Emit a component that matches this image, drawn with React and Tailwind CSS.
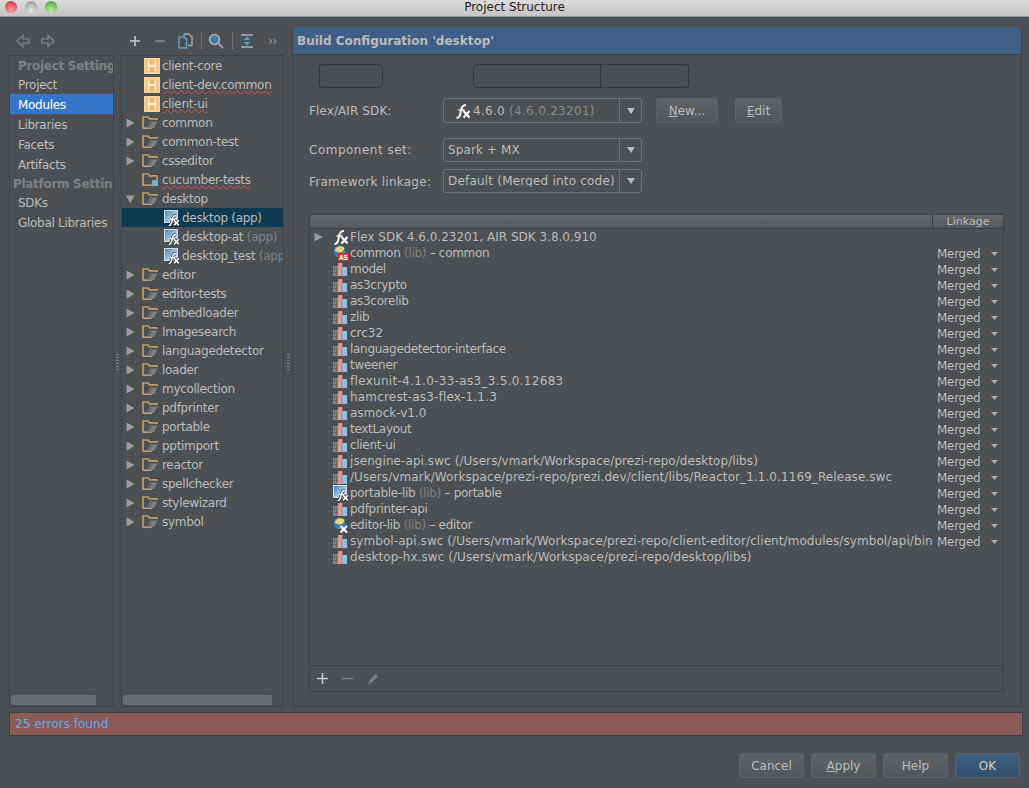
import React from "react";

const F = "[font-family:'DejaVu_Sans',sans-serif]";

function FxGlyph({ sw = 1 }) {
  return (
    <>
      <path d="M1.5 15 C5 15 5.2 11.5 6 7.5 C6.6 4 7.8 2 11 2" fill="none" stroke="#fff" strokeWidth={1.9 * sw} />
      <path d="M3.5 7 H9.5" stroke="#fff" strokeWidth="1.5" />
      <path d="M8.5 8 L14.5 14.5 M14.5 8 L8.5 14.5" stroke="#fff" strokeWidth="2.1" />
    </>
  );
}

function FxIcon({ className = "" }) {
  return (
    <svg width="16" height="16" viewBox="0 0 16 16" className={"shrink-0 " + className}>
      <FxGlyph />
    </svg>
  );
}

function AppIcon({ w = 16, id = "a" }) {
  return (
    <svg width={w} height={w} viewBox="0 0 16 16" className="shrink-0">
      <defs>
        <linearGradient id={"g" + id} x1="0" y1="0" x2="1" y2="1">
          <stop offset="0" stopColor="#3f86c0" />
          <stop offset="1" stopColor="#e4eef6" />
        </linearGradient>
      </defs>
      <rect x="0.5" y="0.5" width="13" height="12" fill={`url(#g${id})`} stroke="#d5dde3" />
      <g transform="translate(3.5 4) scale(0.78)">
        <path d="M1.5 15 C5 15 5.2 11.5 6 7.5 C6.6 4 7.8 2 11 2" fill="none" stroke="#3c3f41" strokeWidth="4" />
        <path d="M8.5 8 L14.5 14.5 M14.5 8 L8.5 14.5" stroke="#3c3f41" strokeWidth="4" />
        <FxGlyph />
      </g>
    </svg>
  );
}

function HIcon() {
  return (
    <svg width="16" height="16" viewBox="0 0 16 16" className="shrink-0">
      <rect x="0.5" y="0.5" width="15" height="15" fill="#fbd394" stroke="#fad08c" />
      <rect x="2" y="2" width="12" height="12" fill="#f5b565" />
      <path d="M4.5 2.5 V13.5 M11.5 2.5 V13.5 M4.5 8 H11.5" stroke="#fff2dc" strokeWidth="2" fill="none" />
    </svg>
  );
}

function FolderIcon({ kind }) {
  return (
    <svg width="17" height="15" viewBox="0 0 17 15" className="shrink-0">
      <path d="M1 13.5 V2 H6 L7.5 3.8 H15" fill="none" stroke="#c09a6b" strokeWidth="1.7" />
      <path d="M1 13.2 H10" stroke="#c09a6b" strokeWidth="1.7" />
      {kind === "test" ? (
        <>
          <path d="M15 3 V8" stroke="#c09a6b" strokeWidth="1.7" />
          <rect x="10" y="8" width="6" height="6" fill="#76aecb" />
        </>
      ) : (
        <>
          <path d="M15 3 V5" stroke="#c09a6b" strokeWidth="1.7" />
          <path d="M5 13 L8 6.5 H15.5 L12 13 Z" fill="#7c7e80" />
          <path d="M7 12 L9.5 7.5" stroke="#57595b" strokeWidth="1.2" />
        </>
      )}
    </svg>
  );
}

function LibIcon() {
  return (
    <svg width="15" height="14" viewBox="0 0 15 14" className="shrink-0">
      <rect x="0" y="4" width="5" height="10" fill="#8c8e90" />
      <path d="M1.7 4 V14 M3.4 4 V14 M0 7 H5 M0 10.5 H5" stroke="#5e6062" strokeWidth="0.7" />
      <rect x="5" y="1" width="4.5" height="13" fill="#d88f8c" />
      <path d="M7.2 1 V14" stroke="#e8aaa7" strokeWidth="1" />
      <rect x="9.5" y="5" width="4.5" height="9" fill="#8cc3e4" />
    </svg>
  );
}

function CommonIcon({ fx }) {
  return (
    <svg width="16" height="16" viewBox="0 0 16 16" className="shrink-0">
      <circle cx="6.5" cy="6.5" r="6" fill="#3f7fb6" />
      <path d="M2 6 C2 2 7 0 10.5 2 C12.5 4 10 7.5 6 7.5 Z" fill="#f3d36b" />
      {fx ? (
        <path d="M7.5 9 L14 15.5 M14 9 L7.5 15.5" stroke="#fff" strokeWidth="2.2" />
      ) : (
        <>
          <rect x="5" y="8" width="11" height="7.5" fill="#c93b35" />
          <text x="6" y="14.5" fontSize="6.5" fontWeight="700" fill="#fff" fontFamily="Liberation Sans">AS</text>
        </>
      )}
    </svg>
  );
}

function Arrow({ open }) {
  return (
    <svg width="9" height="10" viewBox="0 0 9 10" className="shrink-0">
      {open ? <path d="M0 1.5 H8.5 L4.2 9 Z" fill="#9a9c9d" /> : <path d="M0.5 0.5 L8.5 5 L0.5 9.5 Z" fill="#9a9c9d" />}
    </svg>
  );
}

function Caret({ w = 8, h = 6, fill = "#bbbbbb" }) {
  return (
    <svg width={w} height={h} viewBox="0 0 8 6" preserveAspectRatio="none">
      <path d="M0 0 H8 L4 6 Z" fill={fill} />
    </svg>
  );
}

function Sep() {
  return <div className="h-[17px] w-0 border-l border-dotted border-[#85888a]" />;
}

function Btn({ children, className = "", primary }) {
  return (
    <div
      className={
        "flex h-[25px] items-center justify-center rounded-[3px] border bg-gradient-to-b tracking-normal " +
        (primary
          ? "border-[#55616d] from-[#3f5f80] to-[#31506f] text-[#cfcfcf] "
          : "border-[#5e6264] from-[#5e6366] to-[#525759] text-[#bbbbbb] ") +
        className
      }
    >
      {children}
    </div>
  );
}

function Combo({ children, className = "" }) {
  return (
    <div className={"flex w-[199px] items-center rounded-[3px] border border-[#6f7274] bg-[#4c5052] text-[#bbbbbb] " + className}>
      <div className="flex min-w-0 flex-1 items-center overflow-hidden whitespace-nowrap">{children}</div>
      <div className="flex h-full w-[22px] items-center justify-center border-l border-[#6f7274]">
        <Caret />
      </div>
    </div>
  );
}

const leftItems = [
  ["Project Settings", "h", "h-[19px]"],
  ["Project", "", "h-[19px]"],
  ["Modules", "s", "h-[20px] pt-[1px]"],
  ["Libraries", "", "h-[20px] pt-[1px]"],
  ["Facets", "", "h-[20px] pt-[1px]"],
  ["Artifacts", "", "h-[20px] pt-[1px]"],
  ["Platform Settings", "h2", "h-[19px]"],
  ["SDKs", "", "h-[19px]"],
  ["Global Libraries", "", "h-[20px] pt-[1px]"],
];

const tree = [
  ["client-core", "h"],
  ["client-dev.common", "h", "w"],
  ["client-ui", "h", "w"],
  ["common", "f"],
  ["common-test", "f"],
  ["csseditor", "f"],
  ["cucumber-tests", "t", "w"],
  ["desktop", "o"],
  ["desktop", "a", "", " (app)", true],
  ["desktop-at", "a", "", " (app)"],
  ["desktop_test", "a", "", " (app)"],
  ["editor", "f"],
  ["editor-tests", "f"],
  ["embedloader", "f"],
  ["Imagesearch", "f"],
  ["languagedetector", "f"],
  ["loader", "f"],
  ["mycollection", "f"],
  ["pdfprinter", "f"],
  ["portable", "f"],
  ["pptimport", "f"],
  ["reactor", "f"],
  ["spellchecker", "f"],
  ["stylewizard", "f"],
  ["symbol", "f"],
];

const deps = [
  { n: "model" },
  { n: "as3crypto" },
  { n: "as3corelib" },
  { n: "zlib" },
  { n: "crc32", t: "tracking-normal" },
  { n: "languagedetector-interface" },
  { n: "tweener" },
  { n: "flexunit-4.1.0-33-as3_3.5.0.12683", t: "tracking-[0.3px]" },
  { n: "hamcrest-as3-flex-1.1.3", t: "tracking-[0.18px]" },
  { n: "asmock-v1.0", t: "tracking-normal" },
  { n: "textLayout" },
  { n: "client-ui" },
  { n: "jsengine-api.swc (/Users/vmark/Workspace/prezi-repo/desktop/libs)", t: "tracking-[0.07px]" },
  { n: "/Users/vmark/Workspace/prezi-repo/prezi.dev/client/libs/Reactor_1.1.0.1169_Release.swc", t: "tracking-[0.08px]" },
  { n: "portable-lib", ic: "app", g: " (lib)", tail: " – portable" },
  { n: "pdfprinter-api" },
  { n: "editor-lib", ic: "globe", g: " (lib)", tail: " – editor" },
  { n: "symbol-api.swc (/Users/vmark/Workspace/prezi-repo/client-editor/client/modules/symbol/api/bin)", t: "tracking-[0.07px]" },
];

function TreeRow({ r }) {
  const [name, kind, wavy, suffix, sel] = r;
  const isApp = kind === "a";
  return (
    <div className={"flex h-[19px] shrink-0 items-center overflow-hidden whitespace-pre " + (sel ? "bg-[#0d3a50]" : "")}>
      {isApp ? (
        <div className="flex w-[60px] shrink-0 justify-end pr-[2px]">
          <AppIcon id={name} />
        </div>
      ) : (
        <div className={"flex w-[40px] shrink-0 items-center justify-between pl-[4px] " + (kind === "h" ? "pr-[2px]" : "pr-[3px]")}>
          {kind === "f" || kind === "o" ? <Arrow open={kind === "o"} /> : <span />}
          {kind === "h" ? <HIcon /> : null}
          {kind === "f" || kind === "o" ? <FolderIcon /> : null}
          {kind === "t" ? <FolderIcon kind="test" /> : null}
        </div>
      )}
      <span className={wavy ? "underline decoration-wavy decoration-[#d9534f] decoration-1 underline-offset-[1px]" : ""}>{name}</span>
      {suffix ? <span className={sel ? "" : "text-[#7d8082]"}>{suffix}</span> : null}
    </div>
  );
}

function DepRow({ icon, name, gray, tail, merged = true, arrow, t = "" }) {
  return (
    <div className="flex h-[16px] shrink-0 items-center whitespace-pre">
      <div className={"flex min-w-0 flex-1 items-center overflow-hidden " + t}>
        <div className="flex w-[19px] shrink-0 items-center justify-start pl-[4px]">{arrow ? <Arrow /> : null}</div>
        <div className="flex w-[17px] shrink-0 justify-start pl-[4px]">{icon}</div>
        <span className="ml-[4px]">{name}</span>
        {gray ? <span className="text-[#7d8082]">{gray}</span> : null}
        {tail ? <span>{tail}</span> : null}
      </div>
      <div className="flex w-[71px] shrink-0 translate-y-[1px] items-center justify-between pl-[5px] pr-[5px]">
        {merged ? (
          <>
            <span>Merged</span>
            <Caret w={7} h={4} fill="#a8aaac" />
          </>
        ) : null}
      </div>
    </div>
  );
}

function Splitter({ w }) {
  return (
    <div className={"flex shrink-0 flex-col items-center justify-center gap-[2px] " + w}>
      {[0, 1, 2, 3, 4, 5].map((i) => <div key={i} className="h-[1px] w-[3px] bg-[#7a7d7f]" />)}
    </div>
  );
}

export default function App() {
  return (
    <div className={"flex h-[788px] w-[1029px] flex-col overflow-hidden bg-[#4c5052] text-[12px] leading-none tracking-[-0.3px] text-[#bbbbbb] " + F}>
      {/* title bar */}
      <div className="relative flex h-[17px] shrink-0 justify-center border-b border-[#8f8f8f] bg-gradient-to-b from-[#dcdcdc] to-[#c4c4c4] pt-[1px] tracking-normal text-[#222]">
        <div className="absolute left-[5px] top-[1px] flex gap-[8px]">
          <div className="h-[12px] w-[12px] rounded-full bg-[radial-gradient(circle_at_50%_80%,#f9a0a0,#c9252b)]" />
          <div className="h-[12px] w-[12px] rounded-full bg-[radial-gradient(circle_at_50%_80%,#e6e6e6,#8f8f8f)]" />
          <div className="h-[12px] w-[12px] rounded-full bg-[radial-gradient(circle_at_50%_80%,#bdf0a0,#3f9b2b)]" />
        </div>
        <span>Project Structure</span>
      </div>

      {/* content */}
      <div className="flex h-[690px] shrink-0 pl-[9px]">
        {/* left */}
        <div className="flex w-[105px] shrink-0 flex-col">
          <div className="flex h-[38px] shrink-0 items-center gap-[11px] pl-[7px] pt-[9px]">
            <svg width="14" height="14" viewBox="0 0 14 14"><path d="M13 5 H7 V1.5 L1 7 L7 12.5 V9 H13 Z" fill="none" stroke="#77797b" strokeWidth="1.6" /></svg>
            <svg width="14" height="14" viewBox="0 0 14 14"><path d="M1 5 H7 V1.5 L13 7 L7 12.5 V9 H1 Z" fill="none" stroke="#77797b" strokeWidth="1.6" /></svg>
          </div>
          <div className="flex flex-1 flex-col overflow-hidden border border-[#3f4244]">
            {leftItems.map(([t, k, h]) => (
              <div
                key={t}
                className={
                  "flex shrink-0 items-center whitespace-nowrap " + h + " " +
                  (k === "s" ? "bg-[#3375c9] pl-[8px] text-white" : "") +
                  (k === "h" ? "pl-[8px] font-bold text-[#7d8082]" : "") +
                  (k === "h2" ? "pl-[3px] font-bold text-[#7d8082]" : "") +
                  (!k ? "pl-[8px]" : "")
                }
              >
                {t}
              </div>
            ))}
            <div className="mt-auto mb-[1px] ml-[1px] h-[10px] w-[85px] shrink-0 rounded-[2px] bg-[#696c6e]" />
          </div>
        </div>

        <Splitter w="w-[7px]" />

        {/* middle */}
        <div className="flex w-[163px] shrink-0 flex-col">
          <div className="flex h-[38px] shrink-0 items-center pl-[8px] pt-[9px]">
            <svg width="12" height="12" viewBox="0 0 12 12"><path d="M6 1 V11 M1 6 H11" stroke="#c8c8c8" strokeWidth="1.6" /></svg>
            <svg width="12" height="12" viewBox="0 0 12 12" className="ml-[13px]"><path d="M1 6 H11" stroke="#8a8c8e" strokeWidth="1.6" /></svg>
            <svg width="15" height="16" viewBox="0 0 15 16" className="ml-[12px]">
              <path d="M1 4 H6 L8.5 6.5 V15 H1 Z" fill="none" stroke="#5d9cc4" strokeWidth="1.5" />
              <path d="M6 1 H11 L14 4 V12.5 H10 M6 1 V3" fill="none" stroke="#a8aaac" strokeWidth="1.4" />
            </svg>
            <div className="ml-[8px]"><Sep /></div>
            <svg width="16" height="16" viewBox="0 0 16 16" className="ml-[6px]">
              <circle cx="6.5" cy="6.5" r="5" fill="#3f7fa6" stroke="#b0b2b4" strokeWidth="1.6" />
              <path d="M10 10 L15 15" stroke="#9a9c9e" strokeWidth="2.2" />
            </svg>
            <div className="ml-[8px]"><Sep /></div>
            <svg width="14" height="14" viewBox="0 0 14 14" className="ml-[7px]">
              <path d="M1 1 H13 M1 13 H13" stroke="#b0b2b4" strokeWidth="1.4" />
              <path d="M7 2.5 L10.5 6 H3.5 Z M7 11.5 L10.5 8 H3.5 Z" fill="#46a0d0" />
            </svg>
            <span className="ml-[14px] text-[#9a9c9e]">››</span>
          </div>
          <div className="flex flex-1 flex-col overflow-hidden border border-[#3f4244]">
            {tree.map((r, i) => <TreeRow key={i} r={r} />)}
            <div className="mt-auto mb-[1px] ml-[1px] h-[10px] w-[149px] shrink-0 rounded-[2px] bg-[#696c6e]" />
          </div>
        </div>

        <Splitter w="w-[8px]" />

        {/* right panel */}
        <div className="mt-[10px] flex w-[730px] shrink-0 flex-col rounded-t-[5px] border border-t-0 border-[#3f4244]">
          <div className="flex h-[28px] shrink-0 items-center rounded-t-[5px] border-b border-[#3a3d3f] bg-[#3f5f87] pl-[4px] font-bold tracking-normal text-[#bbbbbb]">
            Build Configuration 'desktop'
          </div>
          <div className="flex min-h-0 flex-1 flex-col pl-[16px]">
            <div className="mt-[9px] flex h-[24px] shrink-0">
              <div className="ml-[10px] h-[24px] w-[64px] rounded-[3px] border border-[#36393b]" />
              <div className="ml-[90px] h-[24px] w-[128px] rounded-l-[3px] border border-[#36393b]" />
              <div className="ml-[-1px] h-[24px] w-[89px] rounded-r-[3px] border border-[#36393b]" />
            </div>

            <div className="mt-[10px] flex h-[25px] shrink-0 items-center">
              <span className="w-[134px] tracking-[0.1px]">Flex/AIR SDK:</span>
              <Combo className="h-[25px] tracking-[0.3px]">
                <FxIcon className="ml-[11px]" />
                <span className="ml-[2px]">4.6.0</span>
                <span className="ml-[4px] text-[#85888a]">(4.6.0.23201)</span>
              </Combo>
              <Btn className="ml-[14px] w-[62px]"><span><span className="underline">N</span>ew...</span></Btn>
              <Btn className="ml-[17px] w-[47px]"><span><span className="underline">E</span>dit</span></Btn>
            </div>

            <div className="mt-[15px] flex h-[24px] shrink-0 items-center">
              <span className="w-[134px] tracking-[0.5px]">Component set:</span>
              <Combo className="h-[24px] tracking-[0.1px]"><span className="ml-[4px]">Spark + MX</span></Combo>
            </div>

            <div className="mt-[7px] flex h-[24px] shrink-0 items-center">
              <span className="w-[134px] pt-[1px] tracking-[0.25px]">Framework linkage:</span>
              <Combo className="h-[24px] tracking-[0.2px]"><span className="ml-[4px]">Default (Merged into code)</span></Combo>
            </div>

            {/* table */}
            <div className="mt-[21px] mb-[14px] mr-[17px] flex min-h-0 flex-1 flex-col border border-[#3f4244]">
              <div className="flex h-[14px] shrink-0 border-b border-[#3a3d3f] bg-gradient-to-b from-[#65686a] to-[#55585a]">
                <div className="flex-1" />
                <div className="flex w-[71px] items-center justify-center border-l border-[#3a3d3f] text-[11px] tracking-normal">Linkage</div>
              </div>
              <div className="flex min-h-0 flex-1 flex-col">
                <DepRow arrow t="tracking-normal" icon={<FxIcon />} name="Flex SDK 4.6.0.23201, AIR SDK 3.8.0.910" merged={false} />
                <DepRow icon={<CommonIcon />} name="common" gray=" (lib)" tail=" – common" />
                {deps.map((d, i) => (
                  <DepRow
                    key={i}
                    name={d.n}
                    gray={d.g}
                    tail={d.tail}
                    t={d.t}
                    icon={d.ic === "app" ? <AppIcon id="dep" /> : d.ic === "globe" ? <CommonIcon fx /> : <LibIcon />}
                  />
                ))}
                <DepRow t="tracking-[0.07px]" icon={<LibIcon />} name="desktop-hx.swc (/Users/vmark/Workspace/prezi-repo/desktop/libs)" merged={false} />
              </div>
              <div className="flex h-[26px] shrink-0 items-center gap-[14px] border-t border-[#3f4244] pl-[7px]">
                <svg width="11" height="11" viewBox="0 0 11 11"><path d="M5.5 0 V11 M0 5.5 H11" stroke="#c8c8c8" strokeWidth="1.6" /></svg>
                <svg width="11" height="11" viewBox="0 0 11 11"><path d="M0 5.5 H11" stroke="#77797b" strokeWidth="1.6" /></svg>
                <svg width="13" height="13" viewBox="0 0 13 13"><path d="M1 12 L2 8.5 L8.5 2 L11 4.5 L4.5 11 Z" fill="#77797b" /></svg>
              </div>
            </div>
          </div>
        </div>
      </div>

      {/* error bar */}
      <div className="ml-[9px] mr-[6px] mt-[5px] flex h-[24px] shrink-0 items-center border border-[#3f4244] bg-[#885b57] pl-[5px] tracking-[0.05px] text-[#62a8f0]">
        25 errors found
      </div>

      {/* buttons */}
      <div className="mt-[17px] flex shrink-0 justify-end gap-[7px] pr-[9px]">
        <Btn className="w-[65px]">Cancel</Btn>
        <Btn className="w-[65px]"><span><span className="underline">A</span>pply</span></Btn>
        <Btn className="w-[65px]">Help</Btn>
        <Btn primary className="w-[65px]">OK</Btn>
      </div>
    </div>
  );
}
